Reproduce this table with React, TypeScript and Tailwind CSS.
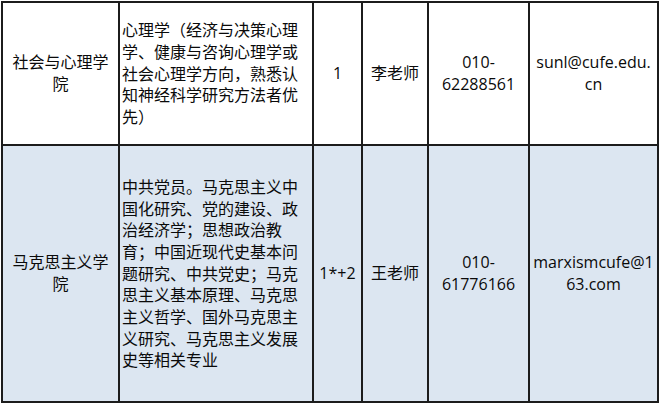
const rows = [
  {
    college: ["社会与心理学", "院"],
    major:
      "心理学（经济与决策心理学、健康与咨询心理学或社会心理学方向，熟悉认知神经科学研究方法者优先）",
    count: "1",
    contact: "李老师",
    phone: ["010-", "62288561"],
    email: ["sunl@cufe.edu.", "cn"],
    bg: "bg-white",
  },
  {
    college: ["马克思主义学", "院"],
    major:
      "中共党员。马克思主义中国化研究、党的建设、政治经济学；思想政治教育；中国近现代史基本问题研究、中共党史；马克思主义基本原理、马克思主义哲学、国外马克思主义研究、马克思主义发展史等相关专业",
    count: "1*+2",
    contact: "王老师",
    phone: ["010-", "61776166"],
    email: ["marxismcufe@1", "63.com"],
    bg: "bg-[#dce6f1]",
  },
];

const Lines = ({ lines }: { lines: string[] }) => (
  <span className="whitespace-nowrap">
    {lines.map((l, i) => (
      <span key={i} className="block">
        {l}
      </span>
    ))}
  </span>
);

export default function App() {
  return (
    <div
      className="min-h-[404px] bg-white pl-[1px] pt-[1px] text-[16px] leading-[21.7px] text-[#0a0a0a]"
      style={{ fontFamily: '"Open Sans", "Noto Sans CJK SC", sans-serif' }}
    >
      <div className="grid w-fit grid-cols-[115px_192px_47px_64px_99px_127px] grid-rows-[141px_255px] gap-[2px] bg-[#1c1c1c] p-[2px]">
        {rows.map((r) => (
          <>
            {/* college */}
            <div className={`${r.bg} flex items-center justify-center px-[4px] text-center`}>
              <Lines lines={r.college} />
            </div>
            {/* major requirements */}
            <div className={`${r.bg} flex items-center pl-[2px] pr-[1px]`}>
              <p className="mt-[2px]">{r.major}</p>
            </div>
            <div className={`${r.bg} flex items-center justify-center`}>
              {r.count}
            </div>
            <div className={`${r.bg} flex items-center justify-center`}>
              {r.contact}
            </div>
            <div className={`${r.bg} flex items-center justify-center text-center`}>
              <Lines lines={r.phone} />
            </div>
            <div className={`${r.bg} flex items-center justify-center text-center`}>
              <Lines lines={r.email} />
            </div>
          </>
        ))}
      </div>
    </div>
  );
}
